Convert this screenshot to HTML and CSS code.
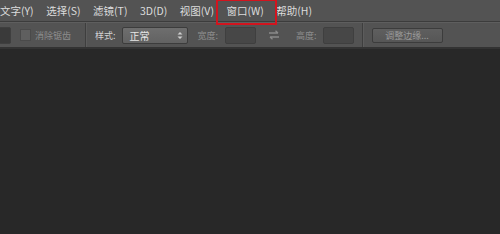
FILE: index.html
```html
<!DOCTYPE html>
<html>
<head>
<meta charset="utf-8">
<link rel="stylesheet" href="styles.css">
</head>
<body>
<div class="menubar">
  <span class="mi">文字(Y)</span>
  <span class="mi">选择(S)</span>
  <span class="mi">滤镜(T)</span>
  <span class="mi">3D(D)</span>
  <span class="mi">视图(V)</span>
  <span class="mi hl">窗口(W)</span>
  <span class="mi">帮助(H)</span>
</div>
<div class="options">
  <div class="field stub"></div>
  <div class="check"></div>
  <span class="lbl dim aa">消除锯齿</span>
  <div class="sep sep1"></div>
  <span class="lbl style">样式:</span>
  <div class="select"><span>正常</span>
    <svg class="spin" width="6" height="9" viewBox="0 0 6 9"><path d="M0.5 3.5 L3 1 L5.5 3.5 Z M0.5 5.5 L3 8 L5.5 5.5 Z" fill="#cfcfcf"/></svg>
  </div>
  <span class="lbl dim wl">宽度:</span>
  <div class="field fw"></div>
  <svg class="swap" width="12" height="10" viewBox="0 0 12 10"><path d="M1 3 H10 M7.5 0.8 L10 3 M11 7 H2 M4.5 9.2 L2 7" stroke="#8a8a8a" stroke-width="1.3" fill="none"/></svg>
  <span class="lbl dim hl2">高度:</span>
  <div class="field fh"></div>
  <div class="sep sep2"></div>
  <div class="btn">调整边缘...</div>
</div>
<div class="canvas"></div>
</body>
</html>
```
FILE: styles.css
```css
html, body {
  margin: 0;
  padding: 0;
  background: #282828;
  width: 500px;
  height: 234px;
  overflow: hidden;
  font-family: "Noto Sans CJK SC", "Liberation Sans", sans-serif;
}
.menubar {
  height: 22px;
  background: #535353;
  display: flex;
  align-items: center;
  border-bottom: 1px solid #3c3c3c;
  box-sizing: border-box;
}
.mi {
  font-size: 10.5px;
  color: #dcdcdc;
  margin-right: 12.5px;
  line-height: 22px;
  white-space: nowrap;
}
.mi.hl {
  position: relative;
}
.mi.hl::after {
  content: "";
  position: absolute;
  left: -10px;
  right: -13px;
  top: -1px;
  bottom: -3px;
  border: 2px solid #d2141e;
}
.options {
  height: 24px;
  background: #535353;
  border-top: 1px solid #5e5e5e;
  border-bottom: 2px solid #333333;
  display: flex;
  align-items: center;
}
.field {
  width: 29px;
  height: 15px;
  background: #474747;
  border: 1px solid #3f3f3f;
  border-radius: 2px;
}
.field.stub {
  width: 10px;
  margin-left: -1px;
  background: #3a3a3a;
}
.check {
  width: 9px;
  height: 10px;
  margin-left: 9px;
  background: #5f5f5f;
  border: 1px solid #4a4a4a;
}
.lbl {
  font-size: 9px;
  color: #d2d2d2;
  white-space: nowrap;
}
.lbl.dim { color: #8e8e8e; }
.aa { margin-left: 4px; }
.sep {
  width: 1px;
  height: 24px;
  background: #3e3e3e;
  border-right: 1px solid #5c5c5c;
}
.sep1 { margin-left: 14px; }
.style { margin-left: 8px; }
.select {
  width: 53px;
  height: 15px;
  margin-left: 6px;
  border: 1px solid #3c3c3c;
  border-radius: 2px;
  background: linear-gradient(#6e6e6e, #626262);
  display: flex;
  align-items: center;
  justify-content: space-between;
  padding: 0 4px 0 7px;
  font-size: 10px;
  color: #e6e6e6;
}
.select span { line-height: 15px; }
.wl { margin-left: 10px; }
.fw { margin-left: 7px; }
.swap { margin-left: 12px; }
.hl2 { margin-left: 16px; }
.fh { margin-left: 6px; }
.sep2 { margin-left: 8px; }
.btn {
  width: 69px;
  height: 13px;
  margin-left: 8px;
  border: 1px solid #3c3c3c;
  border-radius: 2px;
  background: linear-gradient(#5f5f5f, #565656);
  font-size: 9px;
  color: #9a9a9a;
  display: flex;
  align-items: center;
  justify-content: center;
}
.canvas {
  height: 190px;
  background: #282828;
}
```
